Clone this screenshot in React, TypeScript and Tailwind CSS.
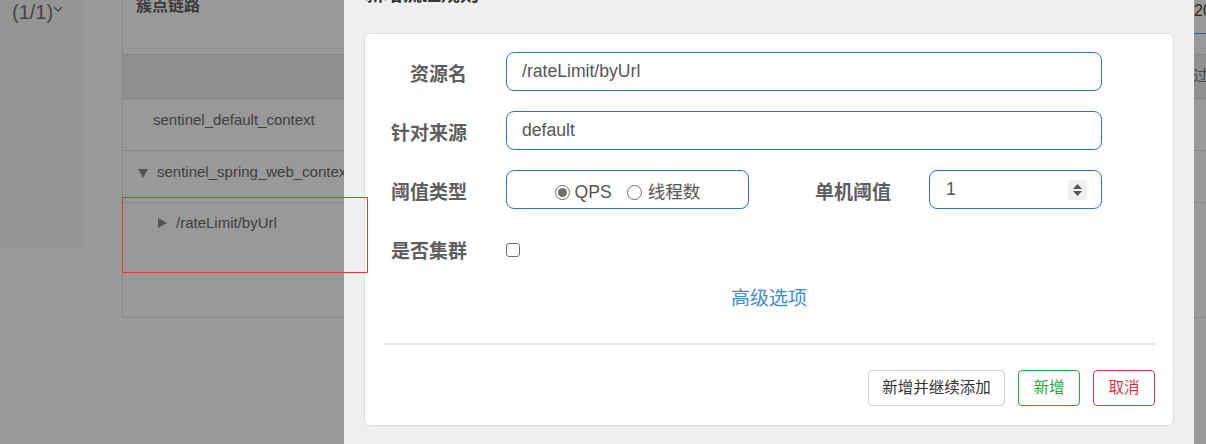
import React from "react";

const font = "font-['Liberation_Sans','Noto_Sans_CJK_SC',sans-serif]";

function Radio({ checked }: { checked?: boolean }) {
  return (
    <span className="flex h-[15px] w-[15px] items-center justify-center rounded-full border border-[#6e6e6e] bg-white">
      {checked ? <span className="h-[9px] w-[9px] rounded-full bg-[#6e6e6e]" /> : null}
    </span>
  );
}

function Label({ children, w = "w-[102px]" }: { children: React.ReactNode; w?: string }) {
  return (
    <div className={`${w} shrink-0 pt-[6px] text-right text-[19px] font-bold leading-[24px] text-[#5e5e5e]`}>
      {children}
    </div>
  );
}

function TextInput({ value }: { value: string }) {
  return (
    <div className="ml-[39px] flex h-[39px] w-[596px] items-center rounded-[8px] border border-[#3273b4] pl-[15px] text-[17.6px] text-[#555]">
      {value}
    </div>
  );
}

function Background() {
  return (
    <div className="flex h-full">
      <div className="h-[248px] w-[83px] shrink-0 bg-[#959595] pl-[12px]">
        <div className="flex items-start text-[20px] leading-[24px] text-[#454545]">
          <span>(1/1)</span>
          <svg width="10" height="6" viewBox="0 0 10 6" className="mt-[6px]">
            <path d="M1 1l4 4 4-4" stroke="#454545" strokeWidth="1.3" fill="none" />
          </svg>
        </div>
      </div>
      <div className="w-[39px] shrink-0" />
      <div className="flex h-[318px] w-[1120px] shrink-0 flex-col rounded-bl-[5px] border-b border-l border-[#868686] text-[15px] text-[#3e3e3e]">
        <div className="flex h-[55px] shrink-0 border-b border-[#868686]">
          <div className="w-[1071px] shrink-0 pl-[13px]">
            <div className="-mt-[2px] text-[16px] font-bold leading-[16px] text-[#3a3a3a]">簇点链路</div>
          </div>
          <div className="h-[34px] flex-1 overflow-hidden whitespace-nowrap border-b border-[#2f5d8a] pt-[1px] text-[16px] leading-[20px] text-[#2a2a2a]">
            2024
          </div>
        </div>
        <div className="flex h-[44px] shrink-0 items-center border-b border-[#868686] bg-[#8f9091]">
          <div className="w-[1055px] shrink-0" />
          <span className="whitespace-nowrap text-[#4a4a4a]">通过QPS</span>
        </div>
        <div className="h-[52px] shrink-0 border-b border-[#868686] pl-[30px] pt-[11px] leading-[20px]">
          sentinel_default_context
        </div>
        <div className="flex h-[52px] shrink-0 items-start border-b border-[#868686] pl-[15px] pt-[11px] leading-[20px]">
          <svg width="10" height="9" viewBox="0 0 10 9" className="mt-[7px] mr-[9px]">
            <path d="M0 0h10L5 9z" fill="#555" />
          </svg>
          sentinel_spring_web_context
        </div>
        <div className="flex flex-1 items-start pl-[35px] pt-[10px] leading-[20px]">
          <svg width="9" height="10" viewBox="0 0 9 10" className="mt-[5px] mr-[9px]">
            <path d="M0 0l9 5-9 5z" fill="#555" />
          </svg>
          /rateLimit/byUrl
        </div>
      </div>
    </div>
  );
}

function Modal() {
  return (
    <div className="absolute left-[344px] top-0 h-[444px] w-[850px] bg-[#efefef] px-[20px]">
      <div className="h-[33px] overflow-hidden pl-[1px]">
        <div className="-mt-[15px] text-[19px] font-bold leading-[19px] text-[#333]">新增流控规则</div>
      </div>
      <div className="h-[393px] w-[810px] rounded-[6px] border border-[#dcdcdc] bg-white pt-[18px]">
        <div className="flex h-[39px] items-center">
          <Label>资源名</Label>
          <TextInput value="/rateLimit/byUrl" />
        </div>
        <div className="mt-[20px] flex h-[39px] items-center">
          <Label>针对来源</Label>
          <TextInput value="default" />
        </div>
        <div className="mt-[20px] flex h-[39px] items-center">
          <Label>阈值类型</Label>
          <div className="ml-[39px] flex h-[39px] w-[243px] shrink-0 items-center justify-center rounded-[8px] border border-[#3273b4] pt-[6px] text-[17.6px] text-[#555]">
            <Radio checked />
            <span className="ml-[5px]">QPS</span>
            <span className="ml-[15px]">
              <Radio />
            </span>
            <span className="ml-[6px]">线程数</span>
          </div>
          <Label w="w-[142px]">单机阈值</Label>
          <div className="ml-[38px] flex h-[39px] w-[173px] items-center justify-between rounded-[8px] border border-[#3273b4] pl-[16px] pr-[14px] text-[17.6px] text-[#555]">
            <span>1</span>
            <span className="flex h-[20px] w-[19px] flex-col items-center justify-center gap-[2px] bg-[#f0f0f0]">
              <svg width="9" height="5" viewBox="0 0 9 5">
                <path d="M0 5L4.5 0 9 5z" fill="#555" />
              </svg>
              <svg width="9" height="5" viewBox="0 0 9 5">
                <path d="M0 0h9L4.5 5z" fill="#555" />
              </svg>
            </span>
          </div>
        </div>
        <div className="mt-[20px] flex h-[39px] items-center">
          <Label>是否集群</Label>
          <span className="ml-[39px] mt-[3px] h-[14px] w-[14px] rounded-[3px] border border-[#6e6e6e] bg-white" />
        </div>
        <div className="mt-[19px] text-center text-[19px] leading-[24px] text-[#3d8bd0]">高级选项</div>
        <div className="mx-[18px] mt-[32px] h-[2px] bg-[#e4e4e4]" />
        <div className="mt-[25px] flex justify-end gap-[13px] pr-[18px] text-[15.5px]">
          <button className="h-[36px] w-[137px] rounded-[4px] border border-[#cccccc] bg-white text-[#333]">新增并继续添加</button>
          <button className="h-[36px] w-[62px] rounded-[4px] border border-[#28a745] bg-white text-[#28a745]">新增</button>
          <button className="h-[36px] w-[62px] rounded-[4px] border border-[#dc3545] bg-white text-[#dc3545]">取消</button>
        </div>
      </div>
    </div>
  );
}

export default function App() {
  return (
    <div className={`relative h-[444px] w-[1206px] overflow-hidden bg-[#999999] ${font}`}>
      <Background />
      <Modal />
      <div className="absolute left-[122px] top-[197px] h-[76px] w-[246px] border border-[#e53935]" />
    </div>
  );
}
